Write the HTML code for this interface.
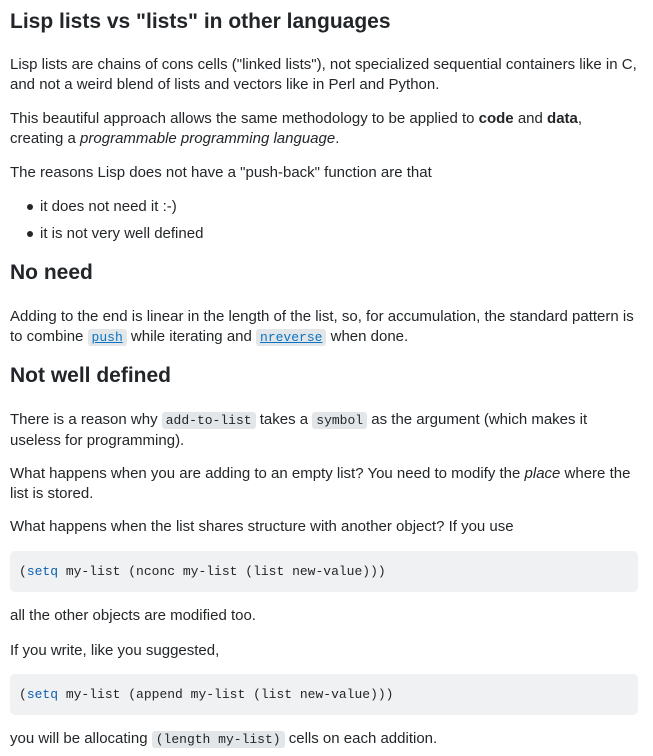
<!DOCTYPE html>
<html><head><meta charset="utf-8"><style>
body{margin:0;width:653px;height:756px;background:#fff;font-family:"Liberation Sans",Arial,sans-serif;font-size:15px;color:#232629;position:relative;overflow:hidden}
.b{position:absolute;left:10px;width:645px;line-height:19.5px;white-space:nowrap}
h1,h2{margin:0;font-weight:bold;position:absolute;left:10px;line-height:26px}
h1{font-size:21px}
h2{font-size:21px}
code{font-family:"Liberation Mono",monospace;font-size:13px;background:#e3e6e8;padding:1px 4px;border-radius:3px}
a code{color:#0a74c4;text-decoration:underline}
.pre{position:absolute;left:10px;width:628px;height:41px;background:#f0f1f3;border-radius:5px;font-family:"Liberation Mono",monospace;font-size:13px;line-height:41px;box-sizing:border-box;padding-left:9px}
.k{color:#0c5fb0}
ul{margin:0;padding:0;list-style:none}
li{position:relative;padding-left:40px;height:27px}
li:before{content:"";position:absolute;left:27px;top:7px;width:6px;height:6px;border-radius:50%;background:#232629}
</style></head><body>
<h1 style="top:9px">Lisp lists vs "lists" in other languages</h1>
<div class="b" style="top:55px">Lisp lists are chains of cons cells ("linked lists"), not specialized sequential containers like in C,<br>and not a weird blend of lists and vectors like in Perl and Python.</div>
<div class="b" style="top:109px">This beautiful approach allows the same methodology to be applied to <b>code</b> and <b>data</b>,<br>creating a <i>programmable programming language</i>.</div>
<div class="b" style="top:163px">The reasons Lisp does not have a "push-back" function are that</div>
<ul class="b" style="top:197px;left:0"><li>it does not need it :-)</li><li>it is not very well defined</li></ul>
<h2 style="top:260px">No need</h2>
<div class="b" style="top:307px">Adding to the end is linear in the length of the list, so, for accumulation, the standard pattern is<br>to combine <a><code>push</code></a> while iterating and <a><code>nreverse</code></a> when done.</div>
<h2 style="top:363px">Not well defined</h2>
<div class="b" style="top:410px">There is a reason why <code>add-to-list</code> takes a <code>symbol</code> as the argument (which makes it<br>useless for programming).</div>
<div class="b" style="top:464px">What happens when you are adding to an empty list? You need to modify the <i>place</i> where the<br>list is stored.</div>
<div class="b" style="top:517px">What happens when the list shares structure with another object? If you use</div>
<div class="pre" style="top:551px">(<span class="k">setq</span> my-list (nconc my-list (list new-value)))</div>
<div class="b" style="top:606px">all the other objects are modified too.</div>
<div class="b" style="top:641px">If you write, like you suggested,</div>
<div class="pre" style="top:674px">(<span class="k">setq</span> my-list (append my-list (list new-value)))</div>
<div class="b" style="top:729px">you will be allocating <code>(length my-list)</code> cells on each addition.</div>
</body></html>
